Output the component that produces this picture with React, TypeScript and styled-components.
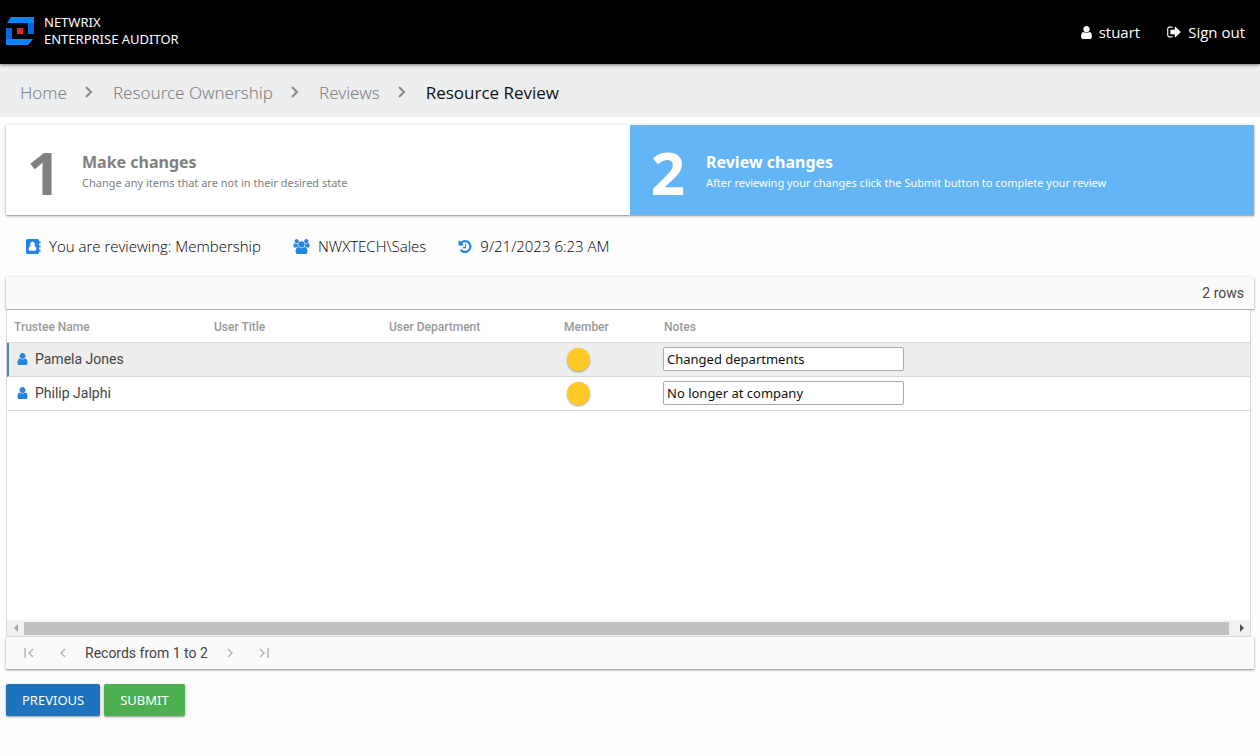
import React from "react";
import styled, { createGlobalStyle } from "styled-components";

const ui = '"Noto Sans", "Open Sans", sans-serif';
const grid = 'Roboto, "Liberation Sans", sans-serif';
const cardShadow = "0 1px 3px rgba(0, 0, 0, 0.3), 0 1px 1px rgba(0, 0, 0, 0.16)";

const GlobalStyle = createGlobalStyle`
  *, *::before, *::after { box-sizing: border-box; }
  body { margin: 0; background: #fdfdfd; font-family: ${ui}; color: #333; }
  button, input { font-family: inherit; }
`;

const Page = styled.div`
  display: flex;
  flex-direction: column;
  min-height: 100vh;
`;

const Header = styled.header`
  display: flex;
  align-items: center;
  justify-content: space-between;
  height: 64px;
  padding: 0 15px 2px 6px;
  background: #000;
  color: #fff;
  box-shadow: 0 1px 3px rgba(0, 0, 0, 0.5);
  z-index: 1;
`;

const Brand = styled.a`
  display: flex;
  align-items: center;
  gap: 10px;
  color: #fff;
  text-decoration: none;
  font-size: 13px;
  line-height: 17px;
`;

const UserNav = styled.nav`
  display: flex;
  gap: 27px;
  padding-top: 2px;
`;

const NavLink = styled.a`
  display: flex;
  align-items: center;
  gap: 7px;
  color: #fff;
  font-family: "Open Sans", sans-serif;
  font-size: 15px;
  line-height: 20px;
  text-decoration: none;
`;

const Breadcrumbs = styled.nav`
  display: flex;
  align-items: center;
  gap: 18px;
  height: 53px;
  padding: 4px 20px 0;
  background: #edeef0;
  font-size: 17px;
  line-height: 24px;
`;

const Crumb = styled.a<{ $current?: boolean }>`
  color: ${(p) => (p.$current ? "#111" : "#808080")};
  font-weight: ${(p) => (p.$current ? 400 : 300)};
  font-family: ${(p) => (p.$current ? '"Open Sans", sans-serif' : ui)};
  text-decoration: none;
`;

const Main = styled.main`
  display: flex;
  flex: 1;
  flex-direction: column;
  padding: 8px 6px 40px;
`;

const Steps = styled.ol`
  display: flex;
  margin: 0;
  padding: 0;
  list-style: none;
  box-shadow: ${cardShadow};
`;

const Step = styled.li<{ $active?: boolean }>`
  display: flex;
  flex: 1;
  align-items: center;
  height: 90px;
  padding-top: 8px;
  background: ${(p) => (p.$active ? "#64b5f6" : "#fff")};
  color: ${(p) => (p.$active ? "#fff" : "#808080")};
`;

const StepNumber = styled.span`
  width: 76px;
  padding-bottom: 4px;
  text-align: center;
  font-size: 60px;
  font-weight: 700;
  line-height: 80px;
`;

const StepTitle = styled.h2`
  margin: 0;
  font-size: 16px;
  font-weight: 700;
  line-height: 22px;
`;

const StepText = styled.p`
  margin: 0;
  padding-bottom: 4px;
  font-size: 11px;
  line-height: 20px;
`;

const Summary = styled.div`
  display: flex;
  gap: 32px;
  padding: 19px 20px;
  font-family: "Open Sans", sans-serif;
  font-size: 15px;
  font-weight: 300;
  line-height: 24px;
  color: #000;
`;

const SummaryItem = styled.span`
  display: flex;
  align-items: center;
  gap: 8px;
  svg { color: #2484e0; }
`;

const Bar = styled.div`
  display: flex;
  align-items: center;
  height: 32px;
  background: #fafafa;
  box-shadow: ${cardShadow};
  color: #444;
  font-family: ${grid};
  font-size: 14px;
`;

const Toolbar = styled(Bar)`
  justify-content: flex-end;
  padding-right: 10px;
`;

const GridBox = styled.div`
  display: flex;
  flex: 1;
  flex-direction: column;
  margin-right: 3px;
  border: 1px solid #d8d8d8;
  border-top-color: #aaa;
  background: #fff;
  font-family: ${grid};
  z-index: 1;
`;

const GridBody = styled.div`
  flex: 1;
`;

const Table = styled.table`
  width: 100%;
  table-layout: fixed;
  border-collapse: separate;
  border-spacing: 0;
`;

const Head = styled.th<{ $width?: number }>`
  width: ${(p) => (p.$width ? `${p.$width}px` : "auto")};
  height: 33px;
  padding: 2px 7px 0;
  border-bottom: 1px solid #d8d8d8;
  color: #999;
  font-size: 12px;
  font-weight: 500;
  text-align: left;
`;

const Row = styled.tr<{ $selected?: boolean }>`
  background: ${(p) => (p.$selected ? "#eee" : "#fff")};
  td:first-child {
    padding-left: 8px;
    border-left: ${(p) => (p.$selected ? "2px solid #3c8dbc" : "2px solid transparent")};
  }
`;

const Cell = styled.td`
  height: 34px;
  padding: 0 6px 2px;
  border-bottom: 1px solid #d8d8d8;
  color: #444;
  font-size: 14px;
`;

const Trustee = styled.span`
  display: flex;
  align-items: center;
  gap: 7px;
  svg { color: #2484e0; }
`;

const Status = styled.span`
  display: block;
  width: 23px;
  height: 23px;
  margin: 2px 0 0 4px;
  border-radius: 50%;
  background: #ffca28;
  box-shadow: 0 1px 2px rgba(0, 0, 0, 0.35);
`;

const Note = styled.input`
  display: block;
  width: 241px;
  height: 24px;
  padding: 0 3px;
  border: 1px solid #aaa;
  border-radius: 2px;
  background: #fff;
  color: #111;
  font-family: ${ui};
  font-size: 13px;
`;

const ScrollBar = styled.div`
  display: flex;
  align-items: center;
  height: 16px;
  background: #f1f1f1;
`;

const ScrollButton = styled.button`
  display: grid;
  place-items: center;
  width: 17px;
  height: 16px;
  padding: 0;
  border: 0;
  background: transparent;
  color: #505050;
  &:disabled { color: #a3a3a3; }
`;

const ScrollThumb = styled.div`
  flex: 1;
  height: 13px;
  margin-right: 4px;
  background: #c1c1c1;
`;

const Pager = styled(Bar)`
  padding-left: 11px;
`;

const PagerText = styled.span`
  margin: 0 10px;
`;

const PagerButton = styled.button`
  display: grid;
  place-items: center;
  width: 24px;
  height: 24px;
  padding: 0;
  border: 0;
  background: transparent;
  color: #b5b5b5;
  & + & { margin-left: 10px; }
`;

const Actions = styled.div`
  display: flex;
  gap: 4px;
  padding-top: 15px;
`;

const ActionButton = styled.button<{ $color: string }>`
  height: 32px;
  padding: 0 16px;
  border: 0;
  border-radius: 2px;
  background: ${(p) => p.$color};
  color: #fff;
  box-shadow: ${cardShadow};
  font-size: 13px;
`;

const paths = {
  user: "M1536 1399q0 109-62.5 187t-150.5 78h-854q-88 0-150.5-78t-62.5-187q0-85 8.5-160.5t31.5-152 58.5-131 94-89 134.5-34.5q131 128 313 128t313-128q76 0 134.5 34.5t94 89 58.5 131 31.5 152 8.5 160.5zm-256-887q0 159-112.5 271.5t-271.5 112.5-271.5-112.5-112.5-271.5 112.5-271.5 271.5-112.5 271.5 112.5 112.5 271.5z",
  signOut: "M704 1440q0 4 1 20t.5 26.5-3 23.5-10 19.5-20.5 6.5h-320q-119 0-203.5-84.5t-84.5-203.5v-704q0-119 84.5-203.5t203.5-84.5h320q13 0 22.5 9.5t9.5 22.5q0 4 1 20t.5 26.5-3 23.5-10 19.5-20.5 6.5h-320q-66 0-113 47t-47 113v704q0 66 47 113t113 47h312l11.5 1 11.5 3 8 5.5 7 9 2 13.5zm928-544q0 26-19 45l-544 544q-19 19-45 19t-45-19-19-45v-288h-448q-26 0-45-19t-19-45v-384q0-26 19-45t45-19h448v-288q0-26 19-45t45-19 45 19l544 544q19 19 19 45z",
  history: "M1664 896q0 156-61 298t-164 245-245 164-298 61q-172 0-327-72.5t-264-204.5q-7-10-6.5-22.5t8.5-20.5l137-138q10-9 25-9 16 2 23 12 73 95 179 147t225 52q104 0 198.5-40.5t163.5-109.5 109.5-163.5 40.5-198.5-40.5-198.5-109.5-163.5-163.5-109.5-198.5-40.5q-98 0-188 35.5t-160 101.5l137 138q31 30 14 69-17 40-59 40h-448q-26 0-45-19t-19-45v-448q0-42 40-59 39-17 69 14l130 129q107-101 244.5-156.5t284.5-55.5q156 0 298 61t245 164 164 245 61 298zm-640-288v448q0 14-9 23t-23 9h-320q-14 0-23-9t-9-23v-64q0-14 9-23t23-9h224v-352q0-14 9-23t23-9h64q14 0 23 9t9 23z",
  users: "M593 896q-162 5-265 128h-134q-82 0-138-40.5t-56-118.5q0-353 124-353 6 0 43.5 21t97.5 42.5 119 21.5q67 0 133-23-5 37-5 66 0 159 81 287zm1071 637q0 120-73 189.5t-194 69.5h-874q-121 0-194-69.5t-73-189.5q0-53 3.5-103.5t14-109 26.5-108.5 43-97.5 62-81 85.5-53.5 111.5-20q10 0 43 21.5t73 48 107 48 135 21.5 135-21.5 107-48 73-48 43-21.5q61 0 111.5 20t85.5 53.5 62 81 43 97.5 26.5 108.5 14 109 3.5 103.5zm-1024-1277q0 106-75 181t-181 75-181-75-75-181 75-181 181-75 181 75 75 181zm704 384q0 159-112.5 271.5t-271.5 112.5-271.5-112.5-112.5-271.5 112.5-271.5 271.5-112.5 271.5 112.5 112.5 271.5zm576 225q0 78-56 118.5t-138 40.5h-134q-103-123-265-128 81-128 81-287 0-29-5-66 66 23 133 23 59 0 119-21.5t97.5-42.5 43.5-21q124 0 124 353zm-128-609q0 106-75 181t-181 75-181-75-75-181 75-181 181-75 181 75 75 181z",
};

const boxes: Record<keyof typeof paths, string> = {
  user: "256 128 1280 1536",
  signOut: "64 192 1600 1408",
  history: "128 128 1536 1536",
  users: "0 0 1920 1792",
};

function Icon({ name, width, height }: { name: keyof typeof paths; width: number; height: number }) {
  return (
    <svg width={width} height={height} viewBox={boxes[name]} fill="currentColor" aria-hidden="true">
      <path d={paths[name]} />
    </svg>
  );
}

function AddressBook() {
  return (
    <svg width="15" height="15" viewBox="0 0 15 15" fill="currentColor" aria-hidden="true">
      <path
        fillRule="evenodd"
        d="M1.500 0H11.500Q13 0 13 1.500V2.500H14.500V4.500H13V6.500H14.500V8.500H13V10.500H14.500V12.500H13V13.500Q13 15 11.500 15H1.500Q0 15 0 13.500V1.500Q0 0 1.500 0ZM6.500 2.800A2.300 2.500 0 0 0 4.800 7Q2.700 7.300 2.700 10.300Q2.700 11.800 4 11.800H9Q10.300 11.800 10.300 10.300Q10.300 7.300 8.200 7A2.300 2.500 0 0 0 6.500 2.800Z"
      />
    </svg>
  );
}

function Logo() {
  return (
    <svg width="28" height="28" viewBox="0 0 28 28" aria-hidden="true">
      <path d="M5 0H28V6H1Z" fill="#0a84ff" />
      <path d="M22 6H28V17H22Z" fill="#0067dc" />
      <path d="M0 11H6V22H0Z" fill="#0067dc" />
      <path d="M0 22H27L22 28H0Z" fill="#0a84ff" />
      <path d="M11 11H17V17H11Z" fill="#d7282f" />
    </svg>
  );
}

function Chevron() {
  return (
    <svg width="10" height="14" viewBox="0 0 10 14" fill="none" stroke="#888" strokeWidth="2" aria-hidden="true">
      <path d="M1 1L6 6L1 11" />
    </svg>
  );
}

function PageIcon({ d, width = 6 }: { d: string; width?: number }) {
  return (
    <svg width={width} height="10" viewBox={`0 0 ${width} 10`} fill="none" stroke="currentColor" strokeWidth="1.500" aria-hidden="true">
      <path d={d} />
    </svg>
  );
}

const crumbs = ["Home", "Resource Ownership", "Reviews"];
const rows = [
  { name: "Pamela Jones", note: "Changed departments" },
  { name: "Philip Jalphi", note: "No longer at company" },
];

export default function App() {
  return (
    <Page>
      <GlobalStyle />
      <Header>
        <Brand href="#">
          <Logo />
          <span>
            NETWRIX
            <br />
            ENTERPRISE AUDITOR
          </span>
        </Brand>
        <UserNav>
          <NavLink href="#">
            <Icon name="user" width={11} height={13} />
            stuart
          </NavLink>
          <NavLink href="#">
            <Icon name="signOut" width={14} height={12} />
            Sign out
          </NavLink>
        </UserNav>
      </Header>
      <Breadcrumbs aria-label="Breadcrumb">
        {crumbs.map((c) => (
          <React.Fragment key={c}>
            <Crumb href="#">{c}</Crumb>
            <Chevron />
          </React.Fragment>
        ))}
        <Crumb href="#" aria-current="page" $current>
          Resource Review
        </Crumb>
      </Breadcrumbs>
      <Main>
        <Steps>
          <Step>
            <StepNumber>1</StepNumber>
            <div>
              <StepTitle>Make changes</StepTitle>
              <StepText>Change any items that are not in their desired state</StepText>
            </div>
          </Step>
          <Step $active>
            <StepNumber>2</StepNumber>
            <div>
              <StepTitle>Review changes</StepTitle>
              <StepText>After reviewing your changes click the Submit button to complete your review</StepText>
            </div>
          </Step>
        </Steps>
        <Summary>
          <SummaryItem>
            <AddressBook />
            You are reviewing: Membership
          </SummaryItem>
          <SummaryItem>
            <Icon name="users" width={17} height={15} />
            NWXTECH\Sales
          </SummaryItem>
          <SummaryItem>
            <Icon name="history" width={14} height={13} />
            9/21/2023 6:23 AM
          </SummaryItem>
        </Summary>
        <Toolbar>2 rows</Toolbar>
        <GridBox>
          <GridBody>
            <Table>
              <thead>
                <tr>
                  <Head $width={200}>Trustee Name</Head>
                  <Head $width={175}>User Title</Head>
                  <Head $width={175}>User Department</Head>
                  <Head $width={100}>Member</Head>
                  <Head>Notes</Head>
                </tr>
              </thead>
              <tbody>
                {rows.map((r, i) => (
                  <Row key={r.name} $selected={i === 0}>
                    <Cell>
                      <Trustee>
                        <Icon name="user" width={11} height={12} />
                        {r.name}
                      </Trustee>
                    </Cell>
                    <Cell />
                    <Cell />
                    <Cell>
                      <Status role="img" aria-label="Changed" />
                    </Cell>
                    <Cell>
                      <Note aria-label={`Notes for ${r.name}`} defaultValue={r.note} />
                    </Cell>
                  </Row>
                ))}
              </tbody>
            </Table>
          </GridBody>
          <ScrollBar>
            <ScrollButton aria-label="Scroll left" disabled>
              <svg width="4" height="8" viewBox="0 0 4 8" fill="currentColor"><path d="M4 0V8L0 4Z" /></svg>
            </ScrollButton>
            <ScrollThumb />
            <ScrollButton aria-label="Scroll right">
              <svg width="4" height="8" viewBox="0 0 4 8" fill="currentColor"><path d="M0 0V8L4 4Z" /></svg>
            </ScrollButton>
          </ScrollBar>
        </GridBox>
        <Pager>
          <PagerButton aria-label="First page"><PageIcon width={10} d="M1 0V10M9 1L5 5L9 9" /></PagerButton>
          <PagerButton aria-label="Previous page"><PageIcon d="M5 1L1 5L5 9" /></PagerButton>
          <PagerText>Records from 1 to 2</PagerText>
          <PagerButton aria-label="Next page"><PageIcon d="M1 1L5 5L1 9" /></PagerButton>
          <PagerButton aria-label="Last page"><PageIcon width={10} d="M9 0V10M1 1L5 5L1 9" /></PagerButton>
        </Pager>
        <Actions>
          <ActionButton $color="#1e73be">PREVIOUS</ActionButton>
          <ActionButton $color="#4caf50">SUBMIT</ActionButton>
        </Actions>
      </Main>
    </Page>
  );
}
